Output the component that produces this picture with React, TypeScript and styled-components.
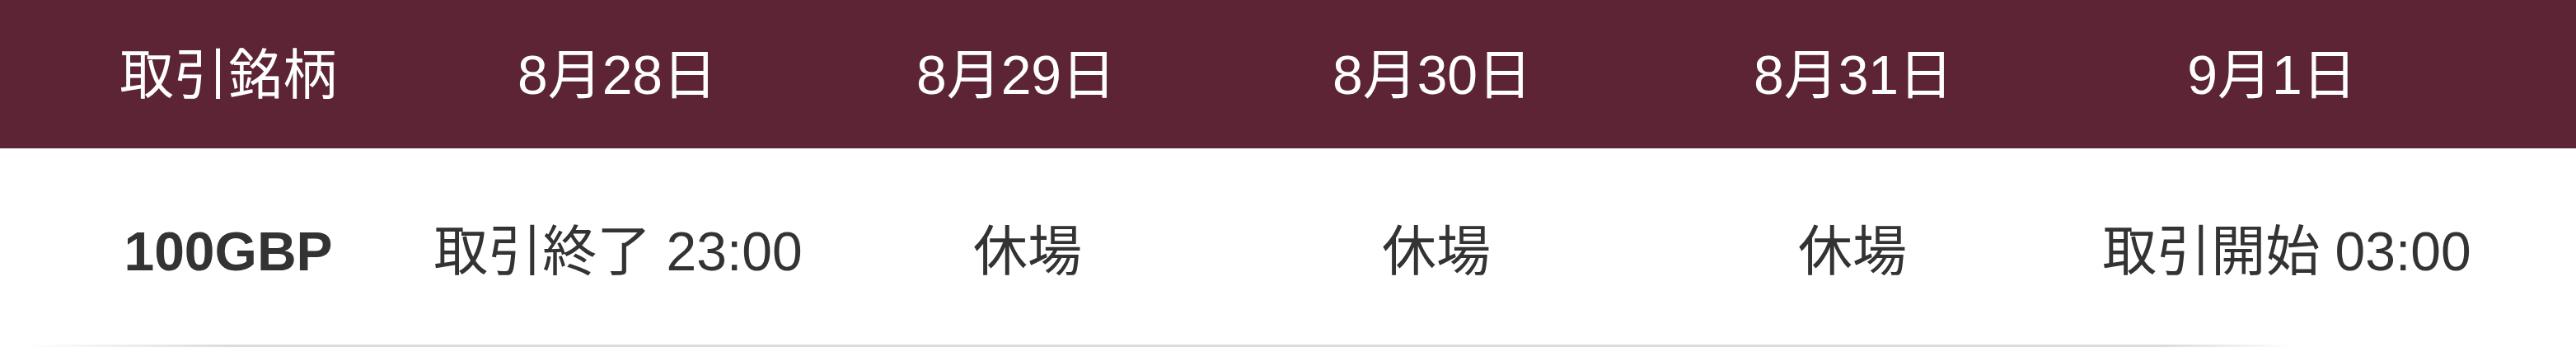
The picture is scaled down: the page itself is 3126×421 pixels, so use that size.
import React from "react";
import styled, { createGlobalStyle } from "styled-components";

const GlobalStyle = createGlobalStyle`
  html, body {
    margin: 0;
    padding: 0;
    background: #fff;
  }
  body {
    font-family: "Liberation Sans", "Noto Sans CJK JP", sans-serif;
  }
`;

interface RowProps {
  $columns: string;
}

const Schedule = styled.div`
  width: 3126px;
  display: flex;
  flex-direction: column;
`;

const HeadRow = styled.div<RowProps>`
  height: 180px;
  background: #5c2434;
  display: grid;
  grid-template-columns: ${(p) => p.$columns};
  padding-left: 44px;
  align-items: center;
`;

const BodyRow = styled.div<RowProps>`
  height: 238px;
  display: grid;
  grid-template-columns: ${(p) => p.$columns};
  padding-left: 44px;
  align-items: center;
`;

const HeadCell = styled.div`
  color: #fff;
  font-size: 66px;
  line-height: 1;
  text-align: center;
  white-space: nowrap;
  padding-top: 2px;
`;

const Cell = styled.div<{ $bold?: boolean }>`
  color: #333;
  font-size: 66px;
  line-height: 1;
  text-align: center;
  white-space: nowrap;
  font-weight: ${(p) => (p.$bold ? 700 : 400)};
  padding-top: 12px;
`;

const BottomLine = styled.div`
  height: 3px;
  background: linear-gradient(
    90deg,
    rgba(220, 220, 220, 0) 1%,
    #dcdcdc 9%,
    #dcdcdc 84%,
    rgba(220, 220, 220, 0) 89%
  );
`;

const headers = ["取引銘柄", "8月28日", "8月29日", "8月30日", "8月31日", "9月1日"];
const cells = ["100GBP", "取引終了 23:00", "休場", "休場", "休場", "取引開始 03:00"];

export default function App() {
  return (
    <>
      <GlobalStyle />
      <Schedule>
        <HeadRow $columns="466px 478px 490px 520px 502px 514px">
          {headers.map((h) => (
            <HeadCell key={h}>{h}</HeadCell>
          ))}
        </HeadRow>
        <BodyRow $columns="466px 480px 514px 478px 532px 522px">
          {cells.map((c, i) => (
            <Cell key={i} $bold={i === 0}>
              {c}
            </Cell>
          ))}
        </BodyRow>
        <BottomLine />
      </Schedule>
    </>
  );
}
